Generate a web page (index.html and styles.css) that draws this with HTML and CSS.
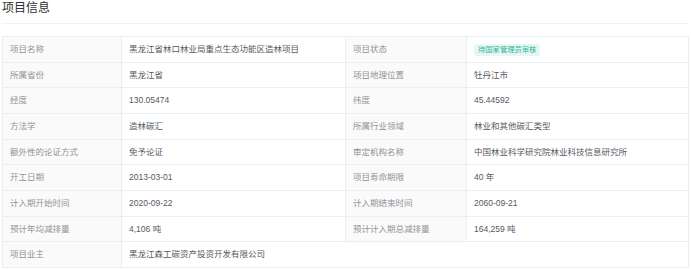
FILE: index.html
```html
<!DOCTYPE html>
<html lang="zh-CN">
<head>
  <meta charset="UTF-8">
  <meta name="viewport" content="width=device-width, initial-scale=1.0">
  <title>项目信息</title>
  <link rel="stylesheet" href="styles.css">
</head>
<body>
  <div class="panel">
    <!-- Header -->
    <div class="panel-header">
      <h2>项目信息</h2>
    </div>

    <!-- Info table -->
    <table class="info-table">
      <colgroup>
        <col class="col-label">
        <col class="col-value">
        <col class="col-label2">
        <col>
      </colgroup>
      <tbody>
        <tr>
          <td class="label">项目名称</td>
          <td>黑龙江省林口林业局重点生态功能区造林项目</td>
          <td class="label">项目状态</td>
          <td><span class="tag">待国家管理员审核</span></td>
        </tr>
        <tr>
          <td class="label">所属省份</td>
          <td>黑龙江省</td>
          <td class="label">项目地理位置</td>
          <td>牡丹江市</td>
        </tr>
        <tr>
          <td class="label">经度</td>
          <td>130.05474</td>
          <td class="label">纬度</td>
          <td>45.44592</td>
        </tr>
        <tr>
          <td class="label">方法学</td>
          <td>造林碳汇</td>
          <td class="label">所属行业领域</td>
          <td>林业和其他碳汇类型</td>
        </tr>
        <tr>
          <td class="label">额外性的论证方式</td>
          <td>免予论证</td>
          <td class="label">审定机构名称</td>
          <td>中国林业科学研究院林业科技信息研究所</td>
        </tr>
        <tr>
          <td class="label">开工日期</td>
          <td>2013-03-01</td>
          <td class="label">项目寿命期限</td>
          <td>40 年</td>
        </tr>
        <tr>
          <td class="label">计入期开始时间</td>
          <td>2020-09-22</td>
          <td class="label">计入期结束时间</td>
          <td>2060-09-21</td>
        </tr>
        <tr>
          <td class="label">预计年均减排量</td>
          <td>4,106 吨</td>
          <td class="label">预计计入期总减排量</td>
          <td>164,259 吨</td>
        </tr>
        <tr>
          <td class="label">项目业主</td>
          <td colspan="3">黑龙江森工碳资产投资开发有限公司</td>
        </tr>
      </tbody>
    </table>
  </div>
</body>
</html>
```

FILE: styles.css
```css
body {
  margin: 0;
  padding: 0;
  background-color: #ffffff;
  font-family: "Liberation Sans", "Noto Sans CJK SC", sans-serif;
  color: #606266;
}

.panel {
  padding: 0 2px;
}

.panel-header {
  border-bottom: 1px solid #f2f2f2;
  padding-bottom: 7px;
  margin-bottom: 12px;
}

.panel-header h2 {
  margin: 0;
  font-size: 12px;
  line-height: 16px;
  font-weight: 400;
  color: #303133;
}

.info-table {
  width: 687px;
  border-collapse: collapse;
  table-layout: fixed;
}

.info-table .col-label {
  width: 119px;
}

.info-table .col-value {
  width: 224px;
}

.info-table .col-label2 {
  width: 121px;
}

.info-table td {
  border: 1px solid #ebeef5;
  padding: 4px 7px;
  font-size: 8.5px;
  line-height: 16.67px;
  color: #555a61;
  white-space: nowrap;
  overflow: hidden;
}

.info-table td.label {
  background-color: #fafafa;
  color: #909399;
}

.tag {
  display: inline-block;
  padding: 0 4px;
  line-height: 12px;
  font-size: 7.3px;
  color: #2fb59c;
  background-color: #e6f7f3;
  border-radius: 3px;
  vertical-align: middle;
}
```
